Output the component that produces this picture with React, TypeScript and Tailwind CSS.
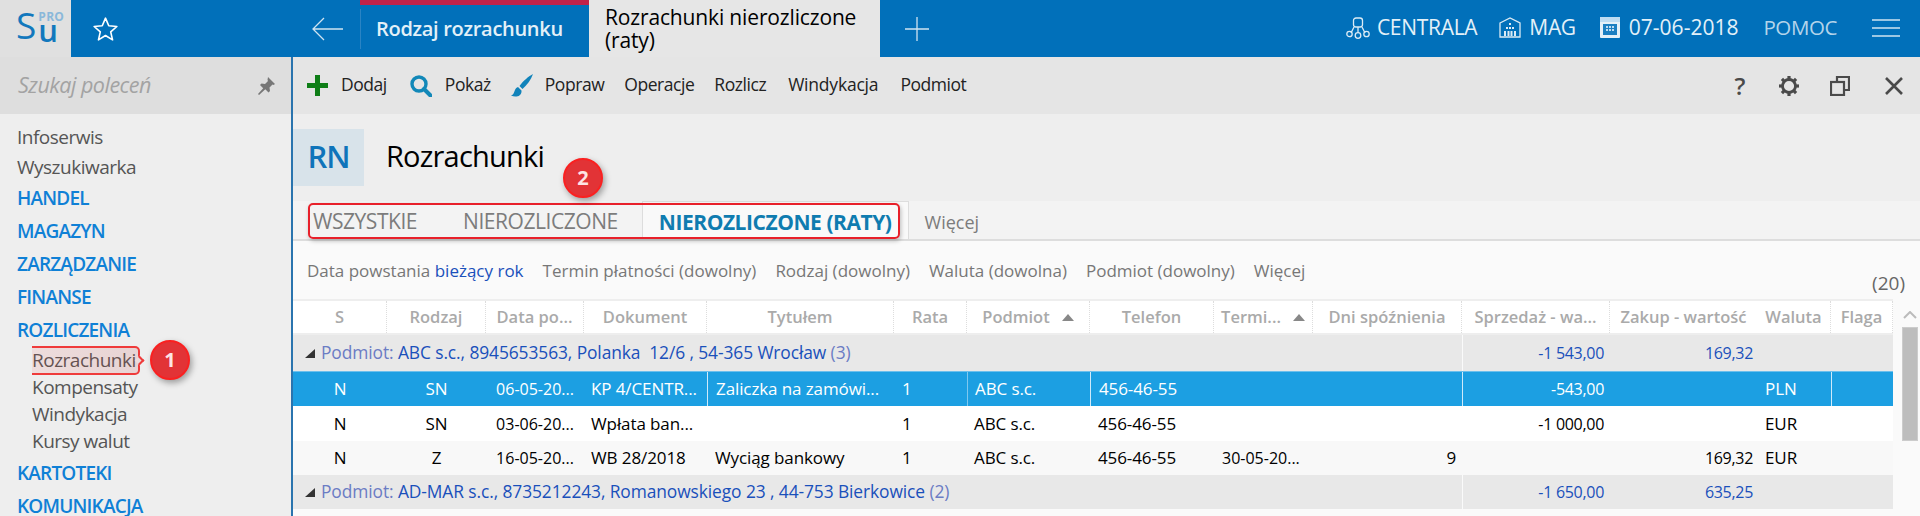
const font = "font-['Open_Sans','Noto_Sans',sans-serif]";
const cols = "grid grid-cols-[94px_99px_98px_123px_187px_73px_123px_124px_99px_149px_148px_147px_74px_62px]";

const headers = ["S", "Rodzaj", "Data po...", "Dokument", "Tytułem", "Rata", "Podmiot", "Telefon", "Termi...", "Dni spóźnienia", "Sprzedaż - wa...", "Zakup - wartość", "Waluta", "Flaga"];

const rows = [
  { s: "N", r: "SN", d: "06-05-20...", dok: "KP 4/CENTR...", t: "Zaliczka na zamówi...", term: "", dni: "", sp: "-543,00", z: "", w: "PLN", sel: true, bg: "h-[35px] bg-[#1c9fe2] text-white" },
  { s: "N", r: "SN", d: "03-06-20...", dok: "Wpłata ban...", t: "", term: "", dni: "", sp: "-1 000,00", z: "", w: "EUR", sel: false, bg: "h-[35px] bg-white text-black" },
  { s: "N", r: "Z", d: "16-05-20...", dok: "WB 28/2018", t: "Wyciąg bankowy", term: "30-05-20...", dni: "9", sp: "", z: "169,32", w: "EUR", sel: false, bg: "h-[34px] bg-[#f8f8f8] text-black" },
];

function SortArrow() {
  return (
    <svg width="12" height="7" viewBox="0 0 12 7" className="shrink-0"><path d="M6 0l6 7H0z" fill="#888" /></svg>
  );
}

function GroupRow({ name, count, sp, z, h }: { name: string; count: string; sp: string; z: string; h: string }) {
  return (
    <div className={`${cols} ${h} bg-[#e8e8e8] items-center leading-none text-[#1a50bb]`}>
      <div className="col-span-10 flex items-center pl-3 whitespace-pre text-[17.4px]">
        <svg width="10" height="9" viewBox="0 0 10 9" className="mr-1.5"><path d="M0 9 L10 0 L10 9 Z" fill="#333" /></svg>
        <span className="text-[#6b7cc4]">Podmiot: </span>{name} <span className="text-[#6b7cc4]">({count})</span>
      </div>
      <div className="h-full flex items-center justify-end pr-1.5 border-l border-white/80 text-[16px] tracking-[-0.3px]">{sp}</div>
      <div className="h-full flex items-center justify-end pr-1 text-[16px] tracking-[-0.3px]">{z}</div>
    </div>
  );
}

export default function App() {
  return (
    <div className={`${font} w-[1920px] h-[516px] overflow-hidden relative bg-[#eee]`}>
      {/* top bar */}
      <div className="flex h-[57px] bg-[#0170ba] text-white">
        <div className="w-[71px] bg-[#e0e0e0] flex items-end pl-4 pb-[18px] text-[#1278bd]">
          <span className="text-[37px] leading-[28px] font-medium">S</span>
          <div className="flex flex-col items-start ml-[2px]">
            <span className="text-[12px] leading-[10px] font-bold text-[#8ab8da] tracking-[0.3px]">PRO</span>
            <span className="text-[31px] leading-[17px] h-[17px] font-semibold">u</span>
          </div>
        </div>
        <div className="w-[289px] flex items-center">
          <svg width="27" height="26" viewBox="0 0 24 24" fill="none" stroke="#fff" strokeWidth="1.5" strokeLinejoin="round" className="ml-[21px]"><path d="M12 2l3 7 7.5.7-5.7 5 1.7 7.3L12 18l-6.500 4 1.700-7.300-5.700-5L9 9z" /></svg>
          <svg width="32" height="24" viewBox="0 0 32 24" className="ml-[193px]" fill="none" stroke="#cfe3f1" strokeWidth="1.3"><path d="M31 12H1M12 1 1 12l11 11" /></svg>
        </div>
        <div className="w-[229px] border-t-[5px] border-[#c1224a] flex items-center pb-[5px] text-[20px] font-semibold tracking-[-0.3px] text-[#e3f0f8]">
          <div className="w-px h-[40px] bg-[#2a84c4] mr-[15px]" />
          Rodzaj rozrachunku
        </div>
        <div className="w-[291px] bg-[#e6e6e6] text-black text-[21px] leading-[23px] px-4 py-[6px] tracking-[-0.15px]">Rozrachunki nierozliczone (raty)</div>
        <div className="flex flex-1 items-center">
          <svg width="26" height="26" viewBox="0 0 26 26" className="ml-6" stroke="#cfe3f1" strokeWidth="1.3"><path d="M13 1v24M1 13h24" /></svg>
          <div className="ml-auto flex items-center text-[21px] tracking-[-0.3px] text-[#e3f0f8] pb-[2px]">
            <svg width="24" height="22" viewBox="0 0 24 22" fill="none" stroke="#dcebf5" strokeWidth="1.3"><rect x="7.500" y="1" width="9" height="9" rx="2.500" /><path d="M8 10l-3 6M16 10l3 6M12 10v6" /><circle cx="3.500" cy="17" r="2.700" /><circle cx="12" cy="18.500" r="2.800" /><circle cx="20.500" cy="17" r="2.700" /></svg>
            <span className="ml-[7px]">CENTRALA</span>
            <svg width="22" height="21" viewBox="0 0 22 21" fill="none" stroke="#dcebf5" strokeWidth="1.3" className="ml-[22px]"><path d="M1 6 11 1l10 5v14H1z" /><path d="M10 6h2v2h-2zM7 10h2v2H7zM10 10h2v2h-2zM13 10h2v2h-2zM5 14h2v5H5zM8.500 14h2v5h-2zM11.500 14h2v5h-2zM15 14h2v5h-2z" fill="#dcebf5" stroke="none" /></svg>
            <span className="ml-2">MAG</span>
            <svg width="20" height="21" viewBox="0 0 20 21" className="ml-6"><rect width="20" height="21" rx="1" fill="#e4f0f8" /><rect width="20" height="5" fill="#bddcf2" /><rect x="3" y="7" width="14" height="11" fill="#1b7fc2" /><path d="M6 9h2v2H6zM9 9h2v2H9zM12 9h2v2h-2zM6 12h2v2H6zM9 12h2v2H9zM12 12h2v2h-2z" fill="#bddcf2" /></svg>
            <span className="ml-[9px] tracking-[0px]">07-06-2018</span>
            <span className="ml-[25px] text-[20.5px] tracking-[-0.4px] text-[#b4d4ea]">POMOC</span>
            <svg width="28" height="18" viewBox="0 0 28 18" className="ml-[35px] mr-5" stroke="#cfe3f1" strokeWidth="1.6"><path d="M0 1h28M0 9h28M0 17h28" /></svg>
          </div>
        </div>
      </div>

      <div className="flex h-[459px]">
        {/* sidebar */}
        <aside className="w-[291px] shrink-0 bg-[#eee] border-r-2 border-[#2a74ae] box-content">
          <div className="h-[57px] bg-[#dedede] flex items-center justify-between pl-[18px] pr-4">
            <span className="italic text-[21.5px] text-[#a3a3a3] tracking-[-0.5px]">Szukaj poleceń</span>
            <svg width="17" height="18" viewBox="0 0 17 18" fill="#777"><path d="M10 0l7 7-1.500 1-1-.5-3 3 .5 3.500-1.500 1.500-3.200-3.200L1 18l-1-1 5.200-5.800L2 8l1.500-1.500 3.500.5 3-3-.5-1z" /></svg>
          </div>
          <div className="pl-[17px] pt-2 text-[19px] tracking-[-0.5px] text-[#555]">
            <div className="h-[30px] flex items-center">Infoserwis</div>
            <div className="h-[30px] flex items-center">Wyszukiwarka</div>
            {["HANDEL", "MAGAZYN", "ZARZĄDZANIE", "FINANSE", "ROZLICZENIA"].map((s) => (
              <div key={s} className="h-[33px] flex items-center font-semibold tracking-[-0.8px] text-[#0f80d6]">{s}</div>
            ))}
            <div className="pl-[15px]">
              {["Rozrachunki", "Kompensaty", "Windykacja", "Kursy walut"].map((s) => (
                <div key={s} className="h-[27px] flex items-center">{s}</div>
              ))}
            </div>
            <div className="h-[2px]" />
            {["KARTOTEKI", "KOMUNIKACJA"].map((s) => (
              <div key={s} className="h-[33px] flex items-center font-semibold tracking-[-0.8px] text-[#0f80d6]">{s}</div>
            ))}
          </div>
        </aside>

        <main className="flex-1 min-w-0">
          {/* toolbar */}
          <div className="h-[57px] bg-[#e5e5e5] flex items-center text-[17.5px] tracking-[-0.45px] text-[#222] pl-[14px]">
            <svg width="21" height="21" viewBox="0 0 21 21"><path d="M8 0h5v8h8v5h-8v8H8v-8H0V8h8z" fill="#0f7e17" /></svg>
            <span className="ml-[13px] pb-[2px]">Dodaj</span>
            <svg width="22" height="22" viewBox="0 0 22 22" fill="none" stroke="#1288b8" className="ml-[23px]"><circle cx="9" cy="9" r="7" strokeWidth="3.400" /><path d="M14 14l6.500 6.500" strokeWidth="4" strokeLinecap="round" /></svg>
            <span className="ml-[13px] pb-[2px]">Pokaż</span>
            <svg width="22" height="23" viewBox="0 0 22 23" className="ml-5"><path d="M22 0C18 2 12 7 8.500 12l3 3C16 11 20 6 22 0zM7 13c-3 1-3 3.500-4 5.500C2.500 20 1.500 21 0 21.500 5 24 11 22 10.500 16.500z" fill="#1183ba" /></svg>
            <span className="ml-3 pb-[2px]">Popraw</span>
            <span className="ml-5 pb-[2px]">Operacje</span>
            <span className="ml-5 pb-[2px]">Rozlicz</span>
            <span className="ml-[22px] pb-[2px] tracking-[-0.2px]">Windykacja</span>
            <span className="ml-[22px] pb-[2px]">Podmiot</span>
            <div className="ml-auto flex items-center text-[#4a4a4a] pr-[17px]">
              <span className="font-semibold text-[24px] leading-none">?</span>
              <svg width="22" height="22" viewBox="0 0 22 22" fill="none" stroke="#4a4a4a" className="ml-[33px]">
                <circle cx="11" cy="11" r="6.500" strokeWidth="2.800" />
                {[0, 45, 90, 135, 180, 225, 270, 315].map((a) => (
                  <path key={a} d="M11 1v3" strokeWidth="3.200" transform={`rotate(${a} 11 11)`} />
                ))}
              </svg>
              <svg width="20" height="20" viewBox="0 0 20 20" fill="none" stroke="#4a4a4a" strokeWidth="2.200" className="ml-[30px]"><path d="M7 6V1h12v13h-5" /><rect x="1" y="6" width="13" height="13" /></svg>
              <svg width="18" height="18" viewBox="0 0 18 18" stroke="#4a4a4a" strokeWidth="2.600" className="ml-[35px]"><path d="M1 1l16 16M17 1 1 17" /></svg>
            </div>
          </div>

          {/* title */}
          <div className="h-[87px] pt-[15px] flex items-start">
            <div className="w-[71px] h-[57px] bg-[#d8e3ea] text-[#0f74ba] text-[31px] font-semibold flex items-center justify-center tracking-[-1px] pb-[2px]">RN</div>
            <div className="ml-[22px] h-[53px] flex items-center text-[29px] tracking-[-0.8px] text-black">Rozrachunki</div>
          </div>

          {/* tabs */}
          <div className="h-[40px] bg-[#f3f3f3] border-b-2 border-[#ddd] flex items-center text-[21px] tracking-[-0.45px] text-[#7c7c7c] pl-[20px]">
            <span className="pt-1">WSZYSTKIE</span>
            <span className="ml-[46px] pt-1">NIEROZLICZONE</span>
            <span className="ml-[24px] h-full flex items-center pt-1 px-4 bg-[#f9f9f9] border border-b-0 border-[#ddd] font-bold text-[#0f7cb0] whitespace-nowrap">NIEROZLICZONE (RATY)</span>
            <span className="ml-4 pt-1 text-[18px] tracking-normal">Więcej</span>
          </div>

          {/* filters + table */}
          <div className="bg-[#fafafa] h-[276px] relative">
            <div className="h-[58px] pl-[14px] pt-[20px] text-[17px] text-[#777] flex gap-[19px] leading-5">
              <span>Data powstania <span className="text-[#1a50bb]">bieżący rok</span></span>
              <span>Termin płatności (dowolny)</span>
              <span>Rodzaj (dowolny)</span>
              <span>Waluta (dowolna)</span>
              <span>Podmiot (dowolny)</span>
              <span>Więcej</span>
            </div>
            <span className="absolute right-[15px] top-[28px] text-[19px] text-[#666]">(20)</span>

            <div className="w-[1600px] text-[17px] tracking-[-0.1px]">
              <div className={`${cols} h-[36px] bg-white border-t-2 border-b-2 border-[#eee] items-center text-center text-[16.5px] tracking-normal font-semibold text-[#aaa] whitespace-nowrap`}>
                {headers.map((h) => (
                  <div key={h} className={`h-full flex items-center justify-center gap-3 ${h === "Zakup - wartość" ? "" : "border-r border-dotted border-[#ddd]"}`}>
                    {h}
                    {(h === "Podmiot" || h === "Termi...") && <SortArrow />}
                  </div>
                ))}
              </div>
              <GroupRow h="h-[36px]" name="ABC s.c., 8945653563, Polanka  12/6 , 54-365 Wrocław" count="3" sp="-1 543,00" z="169,32" />
              {rows.map((r) => (
                <div key={r.d} className={`${cols} items-center whitespace-nowrap ${r.sel ? "border-t border-[#6cbfec]" : ""} ${r.bg}`}>
                  <div className="text-center">{r.s}</div>
                  <div className="text-center">{r.r}</div>
                  <div className="text-center text-[16px] tracking-normal">{r.d}</div>
                  <div className="pl-[7px]">{r.dok}</div>
                  <div className={`pl-2 h-full flex items-center ${r.sel ? "border-l border-[#cfeafa]" : ""}`}>{r.t}</div>
                  <div className="pl-2">1</div>
                  <div className={`pl-[7px] h-full flex items-center ${r.sel ? "border-l border-[#7fc8ef]" : ""}`}>ABC s.c.</div>
                  <div className={`pl-2 h-full flex items-center ${r.sel ? "border-l border-[#cfeafa]" : ""}`}>456-46-55</div>
                  <div className="pl-2 text-[16px] tracking-normal">{r.term}</div>
                  <div className="text-right pr-1.5">{r.dni}</div>
                  <div className={`h-full flex items-center justify-end pr-1.5 text-[16px] tracking-[-0.3px] ${r.sel ? "border-l border-[#cfeafa]" : ""}`}>{r.sp}</div>
                  <div className="text-right pr-1 text-[16px] tracking-[-0.3px]">{r.z}</div>
                  <div className="pl-2">{r.w}</div>
                  <div className={`h-full ${r.sel ? "border-l border-[#cfeafa]" : ""}`} />
                </div>
              ))}
              <GroupRow h="h-[34px]" name="AD-MAR s.c., 8735212243, Romanowskiego 23 , 44-753 Bierkowice" count="2" sp="-1 650,00" z="635,25" />
            </div>

            {/* scrollbar */}
            <svg width="14" height="8" viewBox="0 0 14 8" className="absolute right-[3px] top-[70px]" fill="none" stroke="#bbb" strokeWidth="2"><path d="M1 7l6-6 6 6" /></svg>
            <div className="absolute right-[2px] top-[86px] w-4 h-[114px] bg-[#bdbdbd] border border-[#ccc]" />
          </div>
        </main>
      </div>

      {/* annotations */}
      <div className="absolute left-[32px] top-[346px] w-[108px] h-[29px] rounded-r-[5px] border-y-2 border-r-2 border-[#ef3b3b] bg-gradient-to-r from-[#ef3b3b]/10 to-[#c04040]/15" />
      <div className="absolute left-[136px] top-[357px] w-[7px] h-[7px] rotate-45 bg-[#ecdcdc] border-t-2 border-r-2 border-[#ef3b3b]" />
      <div className="absolute left-[150px] top-[340px] w-10 h-10 rounded-full bg-[#e23336] border-2 border-[#fa2020] text-[#fde4e4] font-bold text-[20px] flex items-center justify-center shadow-[2px_3px_6px_rgba(0,0,0,0.35)]">1</div>
      <div className="absolute left-[308px] top-[203px] w-[592px] h-[36px] rounded-[5px] border-2 border-[#e8202a] shadow-[1px_2px_4px_rgba(0,0,0,0.25)]" />
      <div className="absolute left-[563px] top-[158px] w-10 h-10 rounded-full bg-[#e23336] border-2 border-[#fa2020] text-[#fde4e4] font-bold text-[20px] flex items-center justify-center shadow-[2px_3px_6px_rgba(0,0,0,0.35)]">2</div>
    </div>
  );
}
